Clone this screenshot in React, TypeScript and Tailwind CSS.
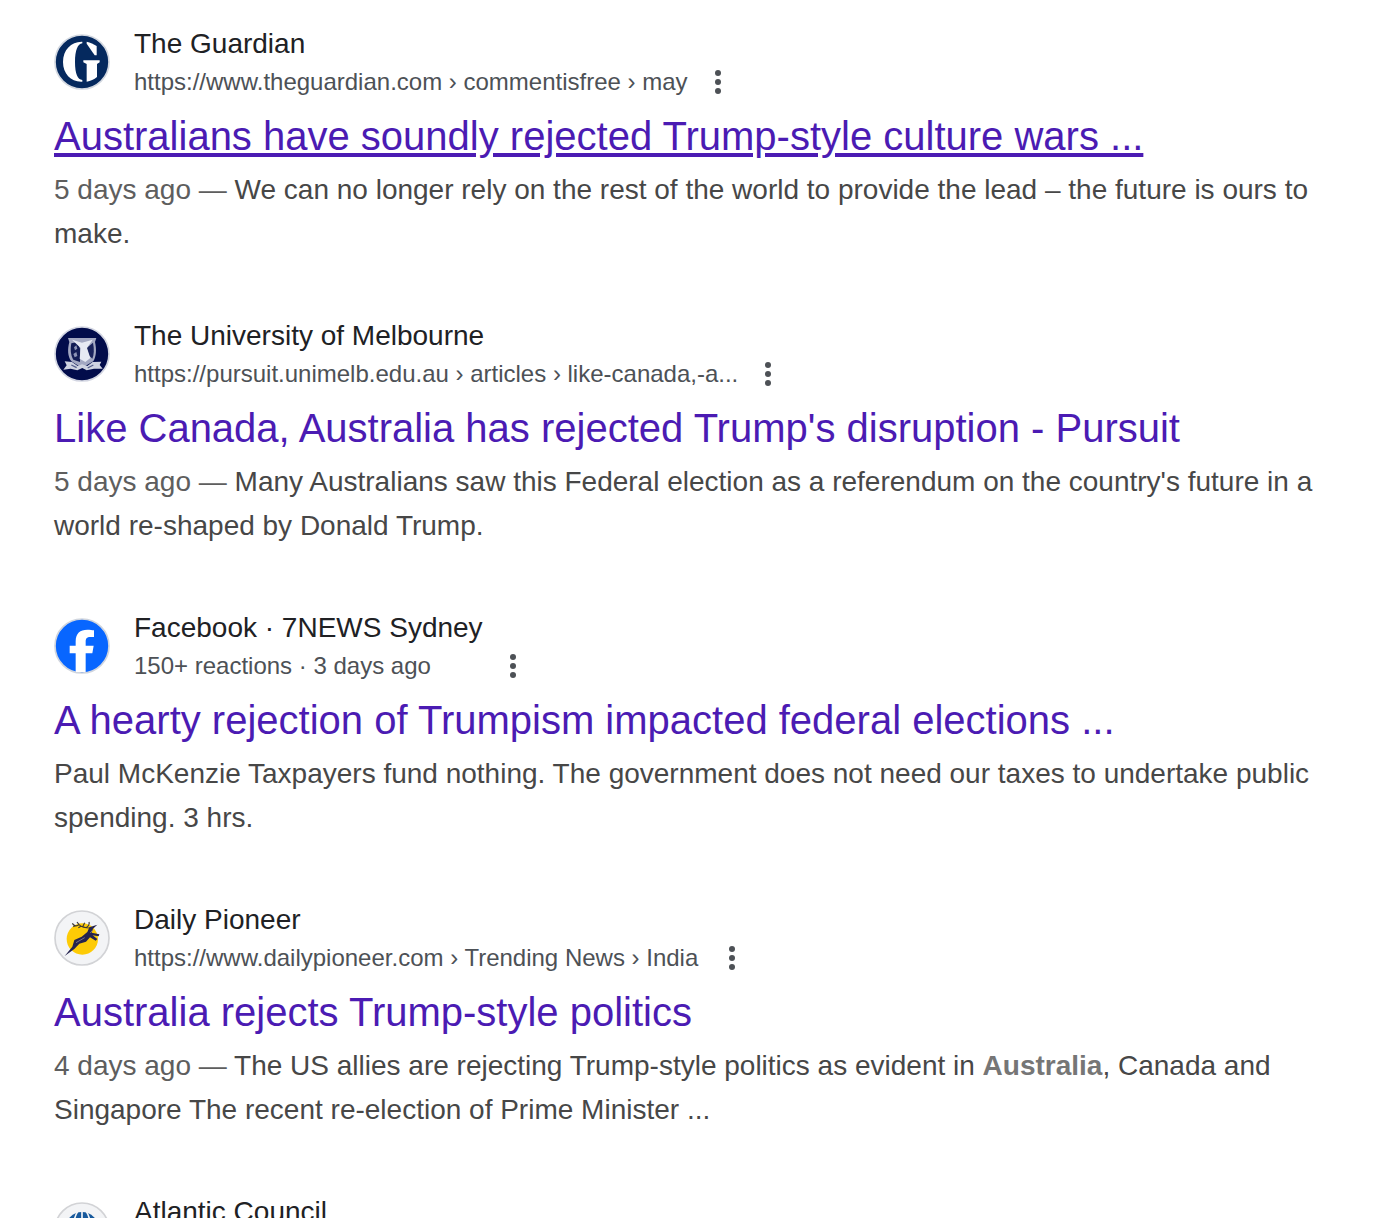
import type { ReactNode } from "react";

const GuardianLogo = () => (
  <svg viewBox="30 30 168 168" className="size-14 shrink-0">
    <circle cx="114" cy="114" r="81" fill="#05295e" stroke="#d3d8e0" strokeWidth="5" />
    <path
      d="M115 53C82 52 57 77 57 114C57 150 82 175 115 173V168C101 167 93 149 93 114C93 79 101 60 115 58Z"
      fill="#fff"
    />
    <path d="M128 53C139 55 149 60 158 66V94H152L128 59Z" fill="#fff" />
    <path d="M118 109H167V115L159 120V159C150 167 140 171 128 173V120L118 115Z" fill="#fff" />
  </svg>
);

const MelbourneLogo = () => (
  <svg viewBox="30 30 168 168" className="size-14 shrink-0">
    <circle cx="114" cy="114" r="81" fill="#020c4b" stroke="#d3d6e2" strokeWidth="5" />
    <path d="M72 66H157L153 78C158 100 157 122 148 136L114 156L82 136C71 122 70 100 76 78Z" fill="#a3a8c2" />
    <path d="M82 82L101 78L108 98V138L88 131C79 116 79 98 82 82Z" fill="#121c55" />
    <path d="M128 96L147 80C151 98 150 116 145 128L134 118Z" fill="#1a235d" />
    <path d="M84 71L114 80L146 71L129 96L139 126L124 138L107 128L110 96Z" fill="#e6e9f3" />
    <path d="M90 94L97 88L100 98L93 103ZM88 114L97 108L100 120L92 124Z" fill="#8c93b5" />
    <path
      d="M62 136L84 138L101 150L114 145L130 150L146 138L172 137L167 147L176 158L150 158L128 163L115 156L100 163L80 158L58 161L68 148Z"
      fill="#cfd3e1"
    />
    <path d="M82 147L98 155M148 147L131 156" stroke="#555f8d" strokeWidth="4" />
  </svg>
);

const FacebookLogo = () => (
  <svg viewBox="30 30 168 168" className="size-14 shrink-0">
    <circle cx="114" cy="114" r="81" fill="#0866ff" stroke="#d0d5de" strokeWidth="5" />
    <path
      d="M95 192V136H77V113H95V100C95 76 108 65 130 65C138 65 145 66 150 67V87H139C128 87 125 92 125 101V113H149L145 136H125V192Z"
      fill="#fff"
    />
  </svg>
);

const PioneerLogo = () => (
  <svg viewBox="30 30 168 168" className="size-14 shrink-0">
    <circle cx="114" cy="114" r="81" fill="#f3f4f6" stroke="#d2d3d6" strokeWidth="5" />
    <circle cx="115" cy="117" r="47" fill="#fdcb06" />
    <path
      d="M62 168L85 140L91 120L113 110L130 96L136 82L160 74L147 86L143 98L166 103L164 109L146 106L160 117L155 122L138 112L126 125L106 131L91 147Z"
      fill="#25234f"
    />
    <path
      d="M139 84C126 84 113 82 105 74C99 79 91 80 85 70M105 74L99 66M116 80L122 68M126 83C133 79 137 73 135 66M93 77L88 80M111 79L103 83"
      fill="none"
      stroke="#3b3735"
      strokeWidth="3.5"
    />
    <path d="M96 128L122 113M139 99L145 91" stroke="#77738c" strokeWidth="3" />
  </svg>
);

const AtlanticLogo = () => (
  <svg viewBox="30 30 168 168" className="size-14 shrink-0">
    <circle cx="114" cy="114" r="81" fill="#f3f4f6" stroke="#d2d3d6" strokeWidth="5" />
    <circle cx="114" cy="110" r="50" fill="#17599c" />
    <path
      d="M114 58V162M101 58C84 86 84 134 101 162M127 58C144 86 144 134 127 162"
      fill="none"
      stroke="#f3f4f6"
      strokeWidth="5"
    />
  </svg>
);

type Result = {
  logo: ReactNode;
  site: string;
  path: string;
  menuGap: string;
  title: string;
  underlined?: boolean;
  date?: string;
  snippet: ReactNode;
};

const results: Result[] = [
  {
    logo: <GuardianLogo />,
    site: "The Guardian",
    path: "https://www.theguardian.com › commentisfree › may",
    menuGap: "ml-[26px]",
    title: "Australians have soundly rejected Trump-style culture wars ...",
    underlined: true,
    date: "5 days ago",
    snippet: "We can no longer rely on the rest of the world to provide the lead – the future is ours to make.",
  },
  {
    logo: <MelbourneLogo />,
    site: "The University of Melbourne",
    path: "https://pursuit.unimelb.edu.au › articles › like-canada,-a...",
    menuGap: "ml-[26px]",
    title: "Like Canada, Australia has rejected Trump's disruption - Pursuit",
    date: "5 days ago",
    snippet: "Many Australians saw this Federal election as a referendum on the country's future in a world re-shaped by Donald Trump.",
  },
  {
    logo: <FacebookLogo />,
    site: "Facebook · 7NEWS Sydney",
    path: "150+ reactions · 3 days ago",
    menuGap: "ml-[78px]",
    title: "A hearty rejection of Trumpism impacted federal elections ...",
    snippet: "Paul McKenzie Taxpayers fund nothing. The government does not need our taxes to undertake public spending. 3 hrs.",
  },
  {
    logo: <PioneerLogo />,
    site: "Daily Pioneer",
    path: "https://www.dailypioneer.com › Trending News › India",
    menuGap: "ml-[30px]",
    title: "Australia rejects Trump-style politics",
    date: "4 days ago",
    snippet: (
      <>
        The US allies are rejecting Trump-style politics as evident in{" "}
        <b className="font-bold text-[#767676]">Australia</b>, Canada and Singapore The recent re-election of Prime
        Minister ...
      </>
    ),
  },
];

const SiteHeader = ({ logo, site, children }: { logo: ReactNode; site: string; children?: ReactNode }) => (
  <div className="flex h-19 shrink-0 items-center">
    {logo}
    <div className="ml-6 h-19">
      <div className="text-[28px] leading-10 text-[#202124]">{site}</div>
      {children}
    </div>
  </div>
);

const ResultCard = ({ result }: { result: Result }) => (
  <div className="h-[292px] shrink-0">
    <SiteHeader logo={result.logo} site={result.site}>
      <div className="flex items-center text-2xl leading-9 text-[#4d5156]">
        <span className="whitespace-nowrap">{result.path}</span>
        <svg viewBox="0 0 8 28" className={`h-7 w-2 ${result.menuGap}`} fill="#4d5156">
          <circle cx="4" cy="5" r="3" />
          <circle cx="4" cy="14" r="3" />
          <circle cx="4" cy="23" r="3" />
        </svg>
      </div>
    </SiteHeader>
    <h3 className="mt-2.5 text-[40px] leading-[52px] whitespace-nowrap text-[#4b1bb3]">
      <a className={result.underlined ? "underline decoration-4 underline-offset-[3px]" : ""}>{result.title}</a>
    </h3>
    <p className="mt-1.5 text-[28px] leading-11 text-[#474747]">
      {result.date && <span className="text-[#5e5e5e]">{result.date} — </span>}
      {result.snippet}
    </p>
  </div>
);

const App = () => {
  return (
    <div className="flex h-[1218px] flex-col overflow-hidden bg-white pt-6 pl-[54px] pr-[60px] font-['Liberation_Sans',Arial,sans-serif]">
      {results.map((result) => (
        <ResultCard key={result.site} result={result} />
      ))}
      <SiteHeader logo={<AtlanticLogo />} site="Atlantic Council" />
    </div>
  );
};

export default App;
